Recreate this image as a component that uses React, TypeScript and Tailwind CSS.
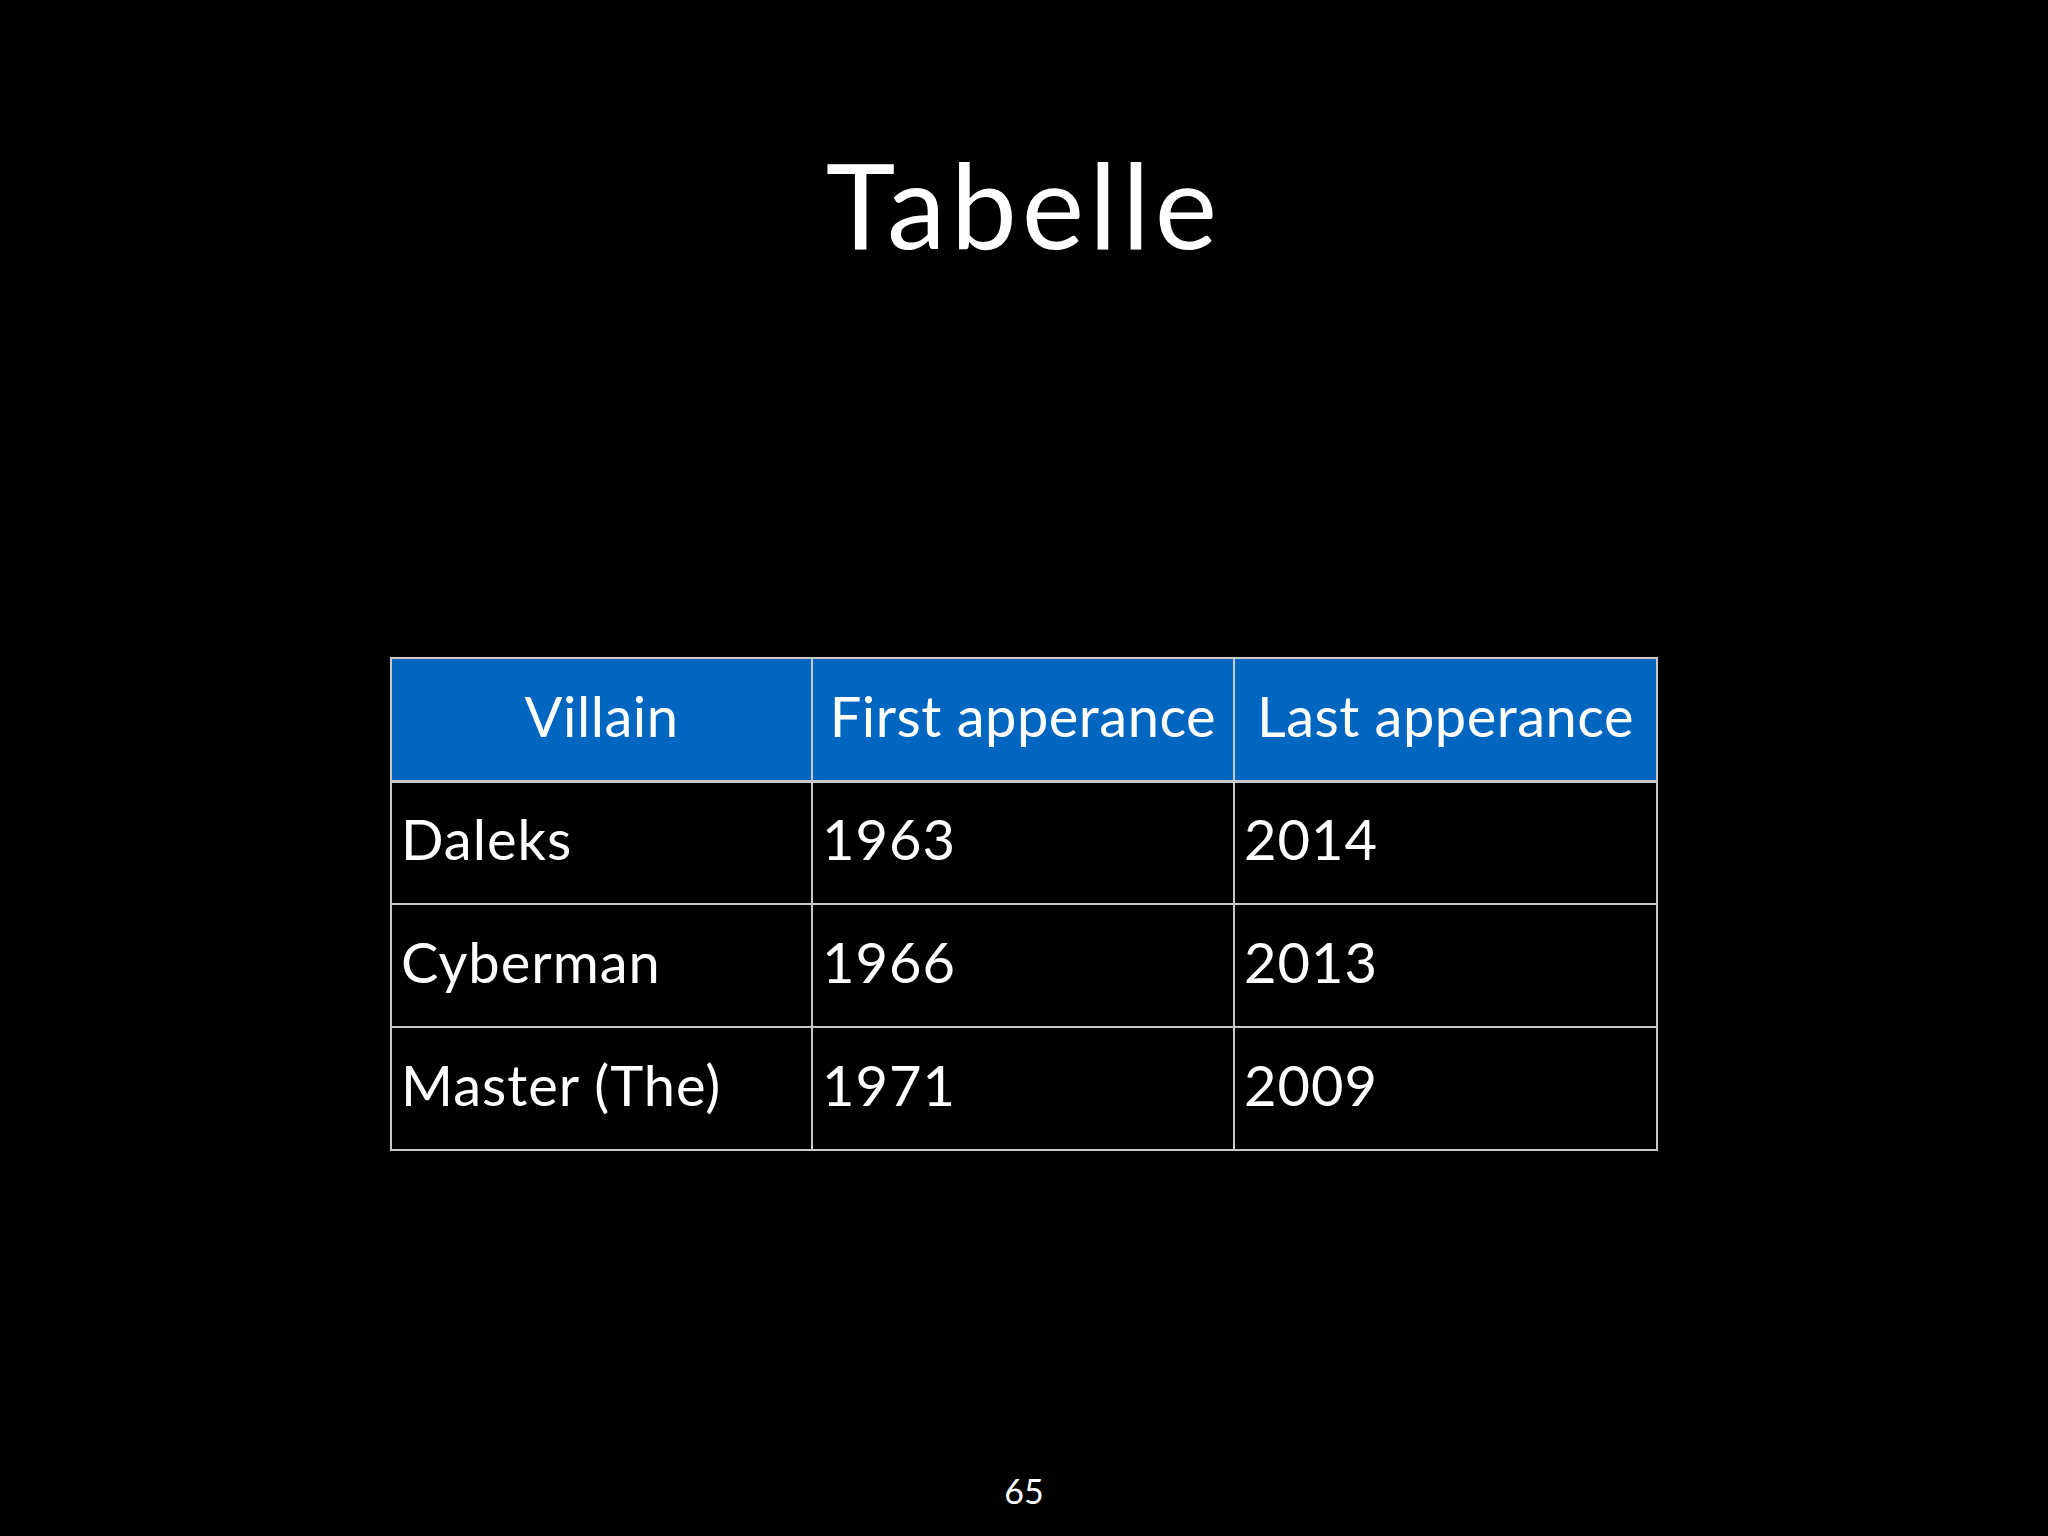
const rows = [
  { villain: "Daleks", first: "1963", last: "2014" },
  { villain: "Cyberman", first: "1966", last: "2013" },
  { villain: "Master (The)", first: "1971", last: "2009" },
]

export default function App() {
  return (
    <div className="w-[2048px] h-[1536px] bg-black text-white flex flex-col items-center font-['Lato','Open_Sans',sans-serif] overflow-hidden">
      <h1 className="mt-[134px] text-[118px] leading-[140px] font-normal tracking-[5px]">Tabelle</h1>

      <table className="mt-[383px] border-collapse table-fixed w-[1266px]">
        <thead>
          <tr className="h-[123px] bg-[#0066c0]">
            <th className="w-[421px] border-2 border-[#c8c8c8] border-b-[3px] pb-[6px] text-[56px] font-normal tracking-[0.5px] text-center">Villain</th>
            <th className="w-[422px] border-2 border-[#c8c8c8] border-b-[3px] pb-[6px] text-[56px] font-normal tracking-[0.5px] text-center whitespace-nowrap">First apperance</th>
            <th className="w-[423px] border-2 border-[#c8c8c8] border-b-[3px] pb-[6px] text-[56px] font-normal tracking-[0.5px] text-center whitespace-nowrap">Last apperance</th>
          </tr>
        </thead>
        <tbody>
          {rows.map((row) => (
            <tr key={row.villain} className="h-[123px]">
              <td className="border-2 border-[#c8c8c8] px-[9px] pb-[8px] text-[56px] tracking-[1px] whitespace-nowrap">{row.villain}</td>
              <td className="border-2 border-[#c8c8c8] px-[9px] pb-[8px] text-[56px] tracking-[1px]">{row.first}</td>
              <td className="border-2 border-[#c8c8c8] px-[9px] pb-[8px] text-[56px] tracking-[1px]">{row.last}</td>
            </tr>
          ))}
        </tbody>
      </table>

      <div className="mt-auto mb-[28px] text-[34px] leading-none">65</div>
    </div>
  )
}
